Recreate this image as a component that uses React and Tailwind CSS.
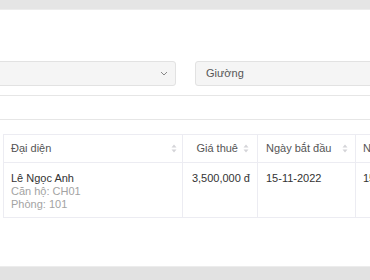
function SortIcon() {
  return (
    <svg width="6" height="9" viewBox="0 0 6 9" className="shrink-0">
      <path d="M3 0.5 L5.5 3.5 H0.5 Z" fill="#d4d4d8" />
      <path d="M3 8.5 L5.5 5.5 H0.5 Z" fill="#d4d4d8" />
    </svg>
  );
}

function Chevron() {
  return (
    <svg width="8" height="5" viewBox="0 0 8 5">
      <path d="M1 1 L4 4 L7 1" fill="none" stroke="#888" strokeWidth="1" />
    </svg>
  );
}

export default function App() {
  return (
    <div className="w-[370px] h-[280px] overflow-hidden bg-white flex flex-col font-['Liberation_Sans',Arial,sans-serif] text-[11px]">
      {/* top bar */}
      <div className="h-[10px] shrink-0 bg-[#e5e5e5] border-b border-[#ededed]" />

      <div className="flex-1 overflow-hidden">
        <div className="-ml-[20px] w-[520px] pt-[51px]">
          {/* filters */}
          <div className="flex gap-[19px]">
            <div className="w-[196px] shrink-0 h-[25px] rounded-[3px] border border-[#e2e2e2] bg-[#f5f5f5] flex items-center justify-end pr-[7px]">
              <Chevron />
            </div>
            <div className="w-[220px] shrink-0 h-[25px] rounded-[3px] border border-[#e2e2e2] bg-[#f5f5f5] flex items-center pl-[10px] text-[#555]">
              Giường
            </div>
          </div>

          <div className="mt-[9px] h-[25px] border-y border-[#e6e6e6]" />

          {/* table */}
          <div className="mt-[14px] ml-[23px] border-t border-l border-[#ececf2] flex flex-col">
            <div className="flex h-[28px] border-b border-[#ececf2] text-[#555]">
              <div className="w-[179px] shrink-0 border-r border-[#ececf2] flex items-center justify-between pl-[7px] pr-[5px]">
                <span>Đại diện</span>
                <SortIcon />
              </div>
              <div className="w-[75px] shrink-0 border-r border-[#ececf2] flex items-center justify-end gap-[5px] pr-[8px]">
                <span>Giá thuê</span>
                <SortIcon />
              </div>
              <div className="w-[98px] shrink-0 border-r border-[#ececf2] flex items-center justify-between pl-[8px] pr-[7px]">
                <span>Ngày bắt đầu</span>
                <SortIcon />
              </div>
              <div className="w-[110px] shrink-0 flex items-center pl-[7px] whitespace-nowrap">
                <span>Ngày kết thúc</span>
              </div>
            </div>
            <div className="flex h-[55px] border-b border-[#ececf2] leading-[13px]">
              <div className="w-[179px] shrink-0 border-r border-[#ececf2] pl-[7px] pt-[9px] flex flex-col">
                <span className="text-[#333]">Lê Ngọc Anh</span>
                <span className="text-[#a3a3a3]">Căn hộ: CH01</span>
                <span className="text-[#a3a3a3]">Phòng: 101</span>
              </div>
              <div className="w-[75px] shrink-0 border-r border-[#ececf2] pr-[7px] pt-[9px] text-right text-[#333]">
                3,500,000 đ
              </div>
              <div className="w-[98px] shrink-0 border-r border-[#ececf2] pl-[8px] pt-[9px] text-[#333]">
                15-11-2022
              </div>
              <div className="w-[110px] shrink-0 pl-[7px] pt-[9px] text-[#333] whitespace-nowrap">
                15-11-2023
              </div>
            </div>
          </div>
        </div>
      </div>

      {/* bottom bar */}
      <div className="h-[14px] shrink-0 bg-[#e2e2e2] border-t border-[#ececec]" />
    </div>
  );
}
